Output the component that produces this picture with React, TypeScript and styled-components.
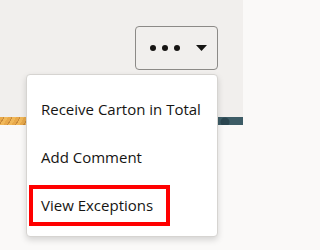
import styled, { createGlobalStyle } from "styled-components";

const GlobalStyle = createGlobalStyle`
  html, body {
    margin: 0;
    padding: 0;
    background: #faf9f8;
  }
  body {
    width: 243px;
    height: 250px;
    overflow: hidden;
    font-family: "Open Sans", "Noto Sans", sans-serif;
  }
`;

const items = [
  { label: "Receive Carton in Total" },
  { label: "Add Comment" },
  { label: "View Exceptions", highlighted: true },
];

export default function App() {
  return (
    <>
      <GlobalStyle />
      <Page>
        <Header>
          <MoreButton aria-label="More actions">
            <Dots>
              <Dot />
              <Dot />
              <Dot />
            </Dots>
            <Caret viewBox="0 0 11 6">
              <path d="M0 0h11L5.5 6z" fill="#161513" />
            </Caret>
          </MoreButton>
        </Header>
        <Banner>
          <BannerLeft />
          <BannerRight />
        </Banner>
        <Menu role="menu">
          {items.map((it) => (
            <MenuItem key={it.label} role="menuitem">
              {it.highlighted ? <Highlight>{it.label}</Highlight> : it.label}
            </MenuItem>
          ))}
        </Menu>
      </Page>
    </>
  );
}

const Page = styled.div`
  position: relative;
  width: 243px;
  height: 250px;
`;

const Header = styled.div`
  height: 117px;
  background: #f1efed;
  box-sizing: border-box;
  padding: 26px 25px 0 0;
  display: flex;
  justify-content: flex-end;
  align-items: flex-start;
`;

const MoreButton = styled.button`
  width: 83px;
  height: 44px;
  box-sizing: border-box;
  border: 1px solid #8c8a87;
  border-radius: 4px;
  background: transparent;
  display: flex;
  align-items: center;
  padding: 0 0 0 14px;
  gap: 16px;
`;

const Dots = styled.span`
  display: flex;
  gap: 6px;
`;

const Dot = styled.span`
  width: 6px;
  height: 6px;
  border-radius: 50%;
  background: #161513;
`;

const Caret = styled.svg`
  width: 11px;
  height: 6px;
`;

const Banner = styled.div`
  height: 8px;
  display: flex;
  justify-content: space-between;
`;

const BannerLeft = styled.div`
  width: 30px;
  background: repeating-linear-gradient(
    120deg,
    #e8a94a 0 3px,
    #c98a3a 3px 4px,
    #f0b85a 4px 7px
  );
`;

const BannerRight = styled.div`
  width: 30px;
  background: radial-gradient(circle at 12px 5px, #2b4650 0 4px, transparent 5px),
    #3d5c66;
`;

const Menu = styled.div`
  position: absolute;
  left: 26px;
  top: 74px;
  width: 192px;
  box-sizing: border-box;
  padding: 10px 0 7px;
  background: #ffffff;
  border: 1px solid #d6d4d1;
  border-radius: 4px;
  box-shadow: 0 3px 6px rgba(0, 0, 0, 0.15);
`;

const MenuItem = styled.div`
  height: 48px;
  display: flex;
  align-items: center;
  padding-left: 14px;
  font-size: 15px;
  color: #161513;
  white-space: nowrap;
`;

const Highlight = styled.span`
  display: flex;
  align-items: center;
  height: 41px;
  box-sizing: border-box;
  margin-left: -12px;
  padding: 0 13px 0 8px;
  border: 4px solid #ff0000;
`;
